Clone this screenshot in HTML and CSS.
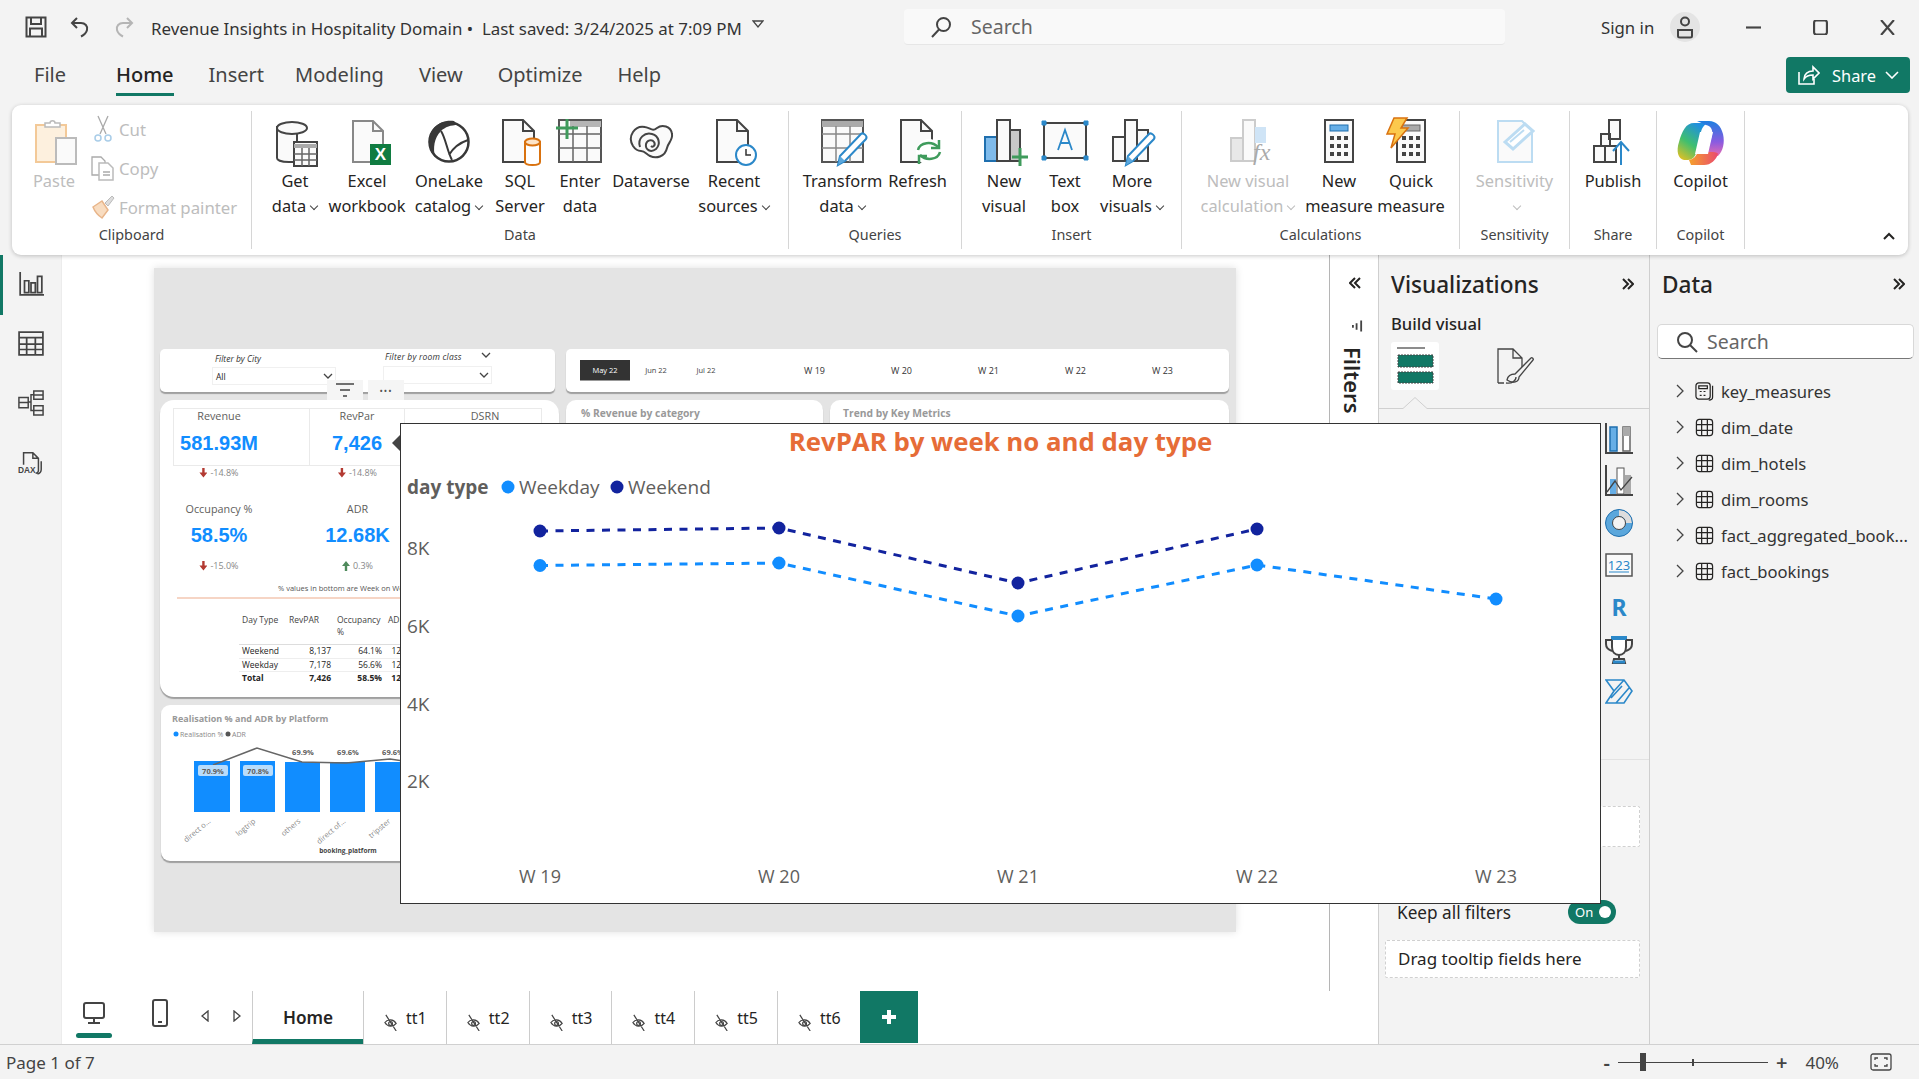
FILE: index.html
```html
<!DOCTYPE html>
<html lang="en">
<head>
    <meta charset="UTF-8">
    <meta name="viewport" content="width=device-width, initial-scale=1.0">
    <title>Revenue Insights in Hospitality Domain</title>
    <link rel="stylesheet" href="styles.css">
</head>
<body>
<div class="app">

    <!-- title bar -->
    <div class="titlebar">
        <div class="quick">
            <svg class="ic22" viewBox="0 0 22 22"><path d="M1.5 1.5h19v19h-19zM6 1.5v6.500h10v-6.500M5 20.500v-8h12v8" class="line"/></svg>
            <svg class="ic22" viewBox="0 0 22 22"><path d="M8 2L3 7l5 5M3 7h9c4 0 7 3 6 7-.6 2.500-3 5-6 6.500" class="line"/></svg>
            <svg class="ic22 off" viewBox="0 0 22 22"><path d="M14 2l5 5-5 5M19 7h-9c-4 0-7 3-6 7 .6 2.500 3 5 6 6.500" class="line"/></svg>
        </div>
        <div class="docName">Revenue Insights in Hospitality Domain •&nbsp; Last saved: 3/24/2025 at 7:09 PM</div>
        <svg class="docArrow" viewBox="0 0 12 8"><path d="M1 1h10L6 7z" class="line thin"/></svg>
        <div class="searchTop">
            <svg class="ic22" viewBox="0 0 22 22"><circle cx="13.500" cy="8.500" r="6.500" class="line"/><path d="M9 13.500L2 21" class="line"/></svg>
            <span>Search</span>
        </div>
        <div class="signIn">Sign in</div>
        <div class="avatar"><svg viewBox="0 0 20 24" width="20" height="24"><circle cx="10" cy="6.500" r="4" class="line"/><path d="M3 21v-6h14v6c0 1-1 1.500-2 1.500H5c-1 0-2-.5-2-1.500z" class="line"/></svg></div>
        <div class="winBtns">
            <svg viewBox="0 0 14 14"><path d="M0 7h14" class="line"/></svg>
            <svg viewBox="0 0 14 14"><rect x="1" y="0.500" width="12" height="13" rx="2" class="line"/></svg>
            <svg viewBox="0 0 14 14"><path d="M1 0l12 14M13 0L1 14" class="line"/></svg>
        </div>
    </div>

    <!-- menu -->
    <div class="menubar">
        <span class="menuItem first">File</span>
        <span class="menuItem active">Home</span>
        <span class="menuItem insert">Insert</span>
        <span class="menuItem">Modeling</span>
        <span class="menuItem">View</span>
        <span class="menuItem">Optimize</span>
        <span class="menuItem">Help</span>
        <div class="shareBtn">
            <svg viewBox="0 0 24 22" width="24" height="22"><path d="M3 8v12h15v-5M8 15c0-5 4-8 9-8V3l6 6-6 6v-4c-4 0-7 1-9 4z" class="line white"/></svg>
            <span>Share</span>
            <svg class="shareArrow" viewBox="0 0 14 8" width="14" height="8"><path d="M1 1l6 6 6-6" class="line white"/></svg>
        </div>
    </div>

    <!-- ribbon -->
    <div class="ribbon">
        <div class="group gClip">
            <div class="groupBody clipBody">
                <div class="rb off pasteBtn">
                    <svg viewBox="0 0 48 48"><path d="M6 7h30v37H6z" fill="#fdf0de" stroke="#f3c998" stroke-width="2"/><path d="M15 9V5h5c0-3 5-3 5 0h5v4z" fill="#fff" stroke="#bbb" stroke-width="1.500"/><rect x="26" y="20" width="20" height="26" fill="#fafafa" stroke="#bbb" stroke-width="2"/></svg>
                    <span>Paste</span>
                </div>
                <div class="clipList">
                    <div class="clipRow off"><svg class="cutIcon" viewBox="0 0 20 28" width="20" height="28"><path d="M5 1l8 18M15 1L7 19" class="line thin grey"/><circle cx="5" cy="23" r="3" fill="none" stroke="#a9cde8" stroke-width="1.500"/><circle cx="15" cy="23" r="3" fill="none" stroke="#a9cde8" stroke-width="1.500"/></svg><span>Cut</span></div>
                    <div class="clipRow off"><svg viewBox="0 0 26 26" width="26" height="26"><path d="M10 20H2V2h9l4 4v2" class="line thin grey"/><path d="M9 8h9l5 5v12H9z" fill="#fff" stroke="#bbb" stroke-width="1.500"/><path d="M13 17h7M13 20h7" class="line thin grey"/></svg><span>Copy</span></div>
                    <div class="clipRow off"><svg viewBox="0 0 26 26" width="26" height="26"><path d="M3 13l9-6 6 9-6 8c-3-2-7-6-9-11z" fill="#f8dcc0" stroke="#e8b58a" stroke-width="1.500"/><path d="M15 9l7-7 2 2-6 8z" fill="#ddd" stroke="#bbb"/></svg><span>Format painter</span></div>
                </div>
            </div>
            <div class="groupName">Clipboard</div>
        </div>

        <div class="group gData">
            <div class="groupBody dataBtns">
                <div class="rb">
                    <svg viewBox="0 0 48 48"><path d="M6 9v31c0 2 4 4 12 4h8V9z" fill="#fafafa" stroke="#444" stroke-width="2"/><ellipse cx="21" cy="10" rx="15" ry="6" fill="#fafafa" stroke="#444" stroke-width="2"/><rect x="23" y="24" width="23" height="24" fill="#fafafa" stroke="#444" stroke-width="2"/><path d="M23 28h23" stroke="#aaa" stroke-width="4"/><path d="M23 36h23M23 42h23M31 30v18M38 30v18" stroke="#666" stroke-width="1.500"/></svg>
                    <span>Get<br>data<i class="chev"></i></span>
                </div>
                <div class="rb">
                    <svg viewBox="0 0 48 48"><path d="M10 3h20l10 10v31H10z" fill="#fafafa" stroke="#888" stroke-width="2"/><path d="M30 3v10h10" fill="none" stroke="#888" stroke-width="2"/><rect x="27" y="26" width="21" height="21" fill="#107c41"/><text x="37.500" y="42" class="xl">X</text></svg>
                    <span>Excel<br>workbook</span>
                </div>
                <div class="rb">
                    <svg viewBox="0 0 48 48"><circle cx="24" cy="24" r="19.500" fill="#fff" stroke="#383838" stroke-width="2.500"/><path d="M29 3C14 1 3 12 4 26c1 6 3 10 6 13-2-9-1-19 6-26 4-4 10-6 17-6z" fill="#383838"/><path d="M16 13c5 8 6 20 11 29M24 37c4-7 10-12 19-15" fill="none" stroke="#383838" stroke-width="2"/></svg>
                    <span>OneLake<br>catalog<i class="chev"></i></span>
                </div>
                <div class="rb">
                    <svg viewBox="0 0 48 48"><path d="M7 2h20l11 11v31H7z" fill="#fafafa" stroke="#444" stroke-width="2"/><path d="M27 2v11h11" fill="none" stroke="#444" stroke-width="2"/><path d="M29 24v20c0 2 4 3 7.500 3s7.500-1 7.500-3V24z" fill="#fff" stroke="#d9720f" stroke-width="2"/><ellipse cx="36.500" cy="24" rx="7.500" ry="3.500" fill="#fde4c8" stroke="#d9720f" stroke-width="2"/></svg>
                    <span>SQL<br>Server</span>
                </div>
                <div class="rb">
                    <svg viewBox="0 0 48 48"><rect x="3" y="2" width="42" height="42" fill="#fafafa" stroke="#555" stroke-width="2"/><path d="M14 6h31" stroke="#b5b5b5" stroke-width="6"/><path d="M3 16h42M3 30h42M17 8v36M31 8v36" stroke="#666" stroke-width="1.500"/><path d="M11 1v20M0 10h22" stroke="#3f9b5c" stroke-width="3"/></svg>
                    <span>Enter<br>data</span>
                </div>
                <div class="rb">
                    <svg viewBox="0 0 48 48"><path d="M6 28c-6-10 2-21 12-19 6 1 7 5 12 1 5-4 14-2 15 6 1 6-4 9-5 14-2 9-11 11-17 8-4-2-5-5-9-5s-6-2-8-5z" fill="#fafafa" stroke="#444" stroke-width="2"/><path d="M13 29c-3-9 5-15 12-13 7 2 9 10 4 15-5 4-11 1-10-5 1-4 6-5 8-2 2 3-1 6-3 4" fill="none" stroke="#444" stroke-width="2"/></svg>
                    <span>Dataverse</span>
                </div>
                <div class="rb">
                    <svg viewBox="0 0 48 48"><path d="M7 2h20l11 11v31H7z" fill="#fafafa" stroke="#444" stroke-width="2"/><path d="M27 2v11h11" fill="none" stroke="#444" stroke-width="2"/><circle cx="36" cy="37" r="10" fill="#fff" stroke="#2b88c9" stroke-width="2"/><path d="M36 31v6h5" fill="none" stroke="#333" stroke-width="1.500"/></svg>
                    <span>Recent<br>sources<i class="chev"></i></span>
                </div>
            </div>
            <div class="groupName">Data</div>
        </div>

        <div class="group gQueries">
            <div class="groupBody queryBtns">
                <div class="rb">
                    <svg viewBox="0 0 48 48"><rect x="3" y="2" width="41" height="42" fill="#fafafa" stroke="#555" stroke-width="2"/><path d="M3 6h41" stroke="#aaa" stroke-width="6"/><path d="M3 16h41M3 30h41M17 8v36M31 8v36" stroke="#888" stroke-width="1.500"/><path d="M19 47l2-9 21-22c2-2 7 2 5 5L26 43z" fill="#fff" stroke="#2b88c9" stroke-width="2"/><path d="M19 47l2-9 5 5z" fill="#5ba7dc"/></svg>
                    <span>Transform<br>data<i class="chev"></i></span>
                </div>
                <div class="rb">
                    <svg viewBox="0 0 48 48"><path d="M7 2h20l11 11v31H7z" fill="#fafafa" stroke="#444" stroke-width="2"/><path d="M27 2v11h11" fill="none" stroke="#444" stroke-width="2"/><circle cx="35" cy="34" r="13" fill="#fff"/><path d="M24 32c2-8 14-9 20-3M46 34c-2 8-14 9-20 3" fill="none" stroke="#3f9b5c" stroke-width="2.500"/><path d="M45 22v8h-8M25 46v-8h8" fill="none" stroke="#3f9b5c" stroke-width="2.500"/></svg>
                    <span>Refresh</span>
                </div>
            </div>
            <div class="groupName">Queries</div>
        </div>

        <div class="group gInsert">
            <div class="groupBody insertBtns">
                <div class="rb">
                    <svg viewBox="0 0 48 48"><rect x="5" y="19" width="13" height="24" fill="#7fbbeb" stroke="#1f6fae" stroke-width="2"/><rect x="17" y="2" width="13" height="41" fill="#fafafa" stroke="#444" stroke-width="2"/><path d="M30 12h10v31H30z" fill="#c8c8c8" stroke="#444" stroke-width="2"/><path d="M40 30v18M32 39h16" stroke="#3f9b5c" stroke-width="3"/></svg>
                    <span>New<br>visual</span>
                </div>
                <div class="rb">
                    <svg viewBox="0 0 48 48"><rect x="3" y="5" width="42" height="35" fill="#fafafa" stroke="#444" stroke-width="2"/><path d="M1 3h4v4H1zM43 3h4v4h-4zM1 38h4v4H1zM43 38h4v4h-4z" fill="#2b88c9" stroke="#2b88c9"/><path d="M17 32l7-20 7 20M19.500 25h9" fill="none" stroke="#2b88c9" stroke-width="1.800"/></svg>
                    <span>Text<br>box</span>
                </div>
                <div class="rb">
                    <svg viewBox="0 0 48 48"><rect x="5" y="19" width="12" height="24" fill="#fafafa" stroke="#444" stroke-width="2"/><rect x="17" y="2" width="12" height="41" fill="#fafafa" stroke="#444" stroke-width="2"/><path d="M29 12h11v31H29z" fill="#fafafa" stroke="#444" stroke-width="2"/><path d="M18 47l2-9 21-22c2-2 7 2 5 5L25 43z" fill="#fff" stroke="#2b88c9" stroke-width="2"/><path d="M18 47l2-9 5 5z" fill="#5ba7dc"/></svg>
                    <span>More<br>visuals<i class="chev"></i></span>
                </div>
            </div>
            <div class="groupName">Insert</div>
        </div>

        <div class="group gCalc">
            <div class="groupBody calcBtns">
                <div class="rb off">
                    <svg viewBox="0 0 48 48"><rect x="7" y="20" width="13" height="23" fill="#e8e8e8" stroke="#ccc" stroke-width="2"/><rect x="19" y="2" width="12" height="41" fill="#fafafa" stroke="#ccc" stroke-width="2"/><path d="M31 9h11v16H31z" fill="#cfe4f6"/><text x="29" y="42" class="fx">fx</text></svg>
                    <span>New visual<br>calculation<i class="chev"></i></span>
                </div>
                <div class="rb">
                    <svg viewBox="0 0 48 48"><rect x="10" y="2" width="28" height="42" fill="#fafafa" stroke="#444" stroke-width="2"/><rect x="15" y="7" width="18" height="6" fill="#66aee6" stroke="#1f6fae"/><path d="M15 18h4v4h-4zM22 18h4v4h-4zM29 18h4v4h-4zM15 26h4v4h-4zM22 26h4v4h-4zM29 26h4v4h-4zM15 34h4v4h-4zM22 34h4v4h-4zM29 34h4v4h-4z" fill="#444"/></svg>
                    <span>New<br>measure</span>
                </div>
                <div class="rb">
                    <svg viewBox="0 0 48 48"><rect x="10" y="2" width="28" height="42" fill="#fafafa" stroke="#444" stroke-width="2"/><rect x="15" y="7" width="18" height="6" fill="#aaa" stroke="#666"/><path d="M15 18h4v4h-4zM22 18h4v4h-4zM29 18h4v4h-4zM15 26h4v4h-4zM22 26h4v4h-4zM29 26h4v4h-4zM15 34h4v4h-4zM22 34h4v4h-4zM29 34h4v4h-4z" fill="#444"/><path d="M7 0h13l-6 10h7L4 30l4-14H0z" fill="#fcc94d" stroke="#d9720f" stroke-width="1.500"/></svg>
                    <span>Quick<br>measure</span>
                </div>
            </div>
            <div class="groupName">Calculations</div>
        </div>

        <div class="group gSens">
            <div class="groupBody soloBtn">
                <div class="rb off">
                    <svg viewBox="0 0 48 48"><path d="M7 3h24l10 10v31H7z" fill="#fafafa" stroke="#bcdcf2" stroke-width="2"/><path d="M14 24L34 6l8 7-20 18z" fill="#fff" stroke="#bcdcf2" stroke-width="3"/><path d="M19 24l14-12" stroke="#bcdcf2" stroke-width="2"/></svg>
                    <span>Sensitivity<br><i class="chev"></i></span>
                </div>
            </div>
            <div class="groupName">Sensitivity</div>
        </div>

        <div class="group gShare">
            <div class="groupBody soloBtn">
                <div class="rb">
                    <svg viewBox="0 0 48 48"><path d="M20 2h11v19H20zM12 16h9v12h-9zM5 28h11v16H5zM16 28h11v16H16z" fill="#fafafa" stroke="#444" stroke-width="2"/><path d="M32 47V24M24 33l8-9 8 9" fill="none" stroke="#2b88c9" stroke-width="2"/></svg>
                    <span>Publish</span>
                </div>
            </div>
            <div class="groupName">Share</div>
        </div>

        <div class="group gCopilot">
            <div class="groupBody soloBtn">
                <div class="rb">
                    <svg viewBox="0 0 48 48">
                        <defs>
                            <linearGradient id="cpA" x1="0" y1="1" x2="0.600" y2="0"><stop offset="0" stop-color="#f5c01b"/><stop offset="0.500" stop-color="#3fbf6f"/><stop offset="1" stop-color="#1f8fe0"/></linearGradient>
                            <linearGradient id="cpB" x1="0.500" y1="0" x2="0.500" y2="1"><stop offset="0" stop-color="#1d7fe0"/><stop offset="0.600" stop-color="#8a5be0"/><stop offset="1" stop-color="#e86bb0"/></linearGradient>
                            <linearGradient id="cpC" x1="0" y1="0" x2="1" y2="0"><stop offset="0" stop-color="#f5a12b"/><stop offset="1" stop-color="#ea4a6e"/></linearGradient>
                        </defs>
                        <path d="M17 5h15c-5 1-7 5-8 9l-5 21c-1 4-4 7-8 7H7C1 41-1 33 2 24 5 13 9 5 17 5z" fill="url(#cpA)"/>
                        <path d="M20 3h12c7 0 12 5 14 13 2 9 0 17-5 22h-7l-4-2 5-19c1-5-1-9-6-10z" fill="url(#cpB)"/>
                        <path d="M12 42c5-1 7-4 9-8h15c3 0 5 1 5 2-2 6-7 11-14 11H14z" fill="url(#cpC)"/>
                        <path d="M23 14h13l-5 22H18z" fill="#fff"/>
                    </svg>
                    <span>Copilot</span>
                </div>
            </div>
            <div class="groupName">Copilot</div>
        </div>

        <svg class="collapse" viewBox="0 0 12 8" width="12" height="8"><path d="M1 7l5-5 5 5" class="line dark"/></svg>
    </div>

    <!-- work area -->
    <div class="main">
        <div class="rail">
            <div class="railBtn current"><svg viewBox="0 0 24 24"><path d="M2 1v21h22" class="line"/><path d="M6 9h4v11H6zM12 11h4v9h-4zM18 5h4v15h-4z" class="line"/></svg></div>
            <div class="railBtn"><svg viewBox="0 0 24 24"><path d="M1 2h22v21H1zM1 7h22M1 13h22M1 18h22M8 7v16M16 7v16" class="line"/></svg></div>
            <div class="railBtn"><svg viewBox="0 0 28 28"><path d="M1 8h10v11H1zM1 13.500h10M17 1h10v9H17zM17 5.500h10M17 17h10v10H17zM17 22h10M11 13h3V5h3M14 13v9h3" class="line"/></svg></div>
            <div class="railBtn"><svg viewBox="0 0 28 26"><path d="M6 15V2h10l6 6v13c0 1-1 3-3 3M16 2v6h6M25 11v9c0 2-1 4-4 5" class="line thin"/><text x="0" y="24" class="dax">DAX</text></svg></div>
        </div>

        <div class="center">
            <div class="canvasRow">
                <div class="canvas">
                    <div class="page">
                        <!-- visuals sit freely on the report page -->
                        <div class="visual vFilter">
                            <span class="slLabel city">Filter by City</span>
                            <span class="slLabel room">Filter by room class</span>
                            <div class="slBox cityBox">All</div>
                            <div class="slBox roomBox"></div>
                            <svg class="slChev c1" viewBox="0 0 10 6"><path d="M1 1l4 4 4-4" class="line thin"/></svg>
                            <svg class="slChev c2" viewBox="0 0 10 6"><path d="M1 1l4 4 4-4" class="line thin"/></svg>
                            <svg class="slChev c3" viewBox="0 0 10 6"><path d="M1 1l4 4 4-4" class="line thin"/></svg>
                        </div>
                        <div class="hoverTab hFilter"><svg viewBox="0 0 18 16" width="18" height="16"><path d="M0 2h18M4 8h10M7 14h4" class="line thin"/></svg></div>
                        <div class="hoverTab hMore"><span class="dots">•••</span></div>

                        <div class="visual vMonth">
                            <span class="mon on">May 22</span>
                            <span class="mon">Jun 22</span>
                            <span class="mon">Jul 22</span>
                            <div class="weeks"><span>W 19</span><span>W 20</span><span>W 21</span><span>W 22</span><span>W 23</span></div>
                        </div>

                        <div class="visual vKpi">
                            <div class="kpiRow tiles">
                                <div class="tile tA"><span class="kLabel">Revenue</span><b class="kVal">581.93M</b></div>
                                <div class="tile tB"><span class="kLabel">RevPar</span><b class="kVal">7,426</b></div>
                                <div class="tile tC"><span class="kLabel">DSRN</span></div>
                            </div>
                            <div class="kpiRow deltas">
                                <div class="colA delta"><i class="arrow down"></i>-14.8%</div>
                                <div class="colB delta"><i class="arrow down"></i>-14.8%</div>
                            </div>
                            <div class="kpiRow second">
                                <div class="colA"><span class="kLabel">Occupancy %</span><b class="kVal">58.5%</b></div>
                                <div class="colB"><span class="kLabel">ADR</span><b class="kVal">12.68K</b></div>
                            </div>
                            <div class="kpiRow deltas lower">
                                <div class="colA delta"><i class="arrow down"></i>-15.0%</div>
                                <div class="colB delta"><i class="arrow up"></i>0.3%</div>
                            </div>
                            <div class="kNote">% values in bottom are Week on Week</div>
                            <div class="kRule"></div>
                            <table class="kTable">
                                <tr class="head"><th class="first colDay">Day Type</th><th class="colRev">RevPAR</th><th class="colOcc">Occupancy<br>%</th><th class="colAdr">ADR</th></tr>
                                <tr><td class="first">Weekend</td><td>8,137</td><td>64.1%</td><td>12,689</td></tr>
                                <tr><td class="first">Weekday</td><td>7,178</td><td>56.6%</td><td>12,679</td></tr>
                                <tr class="total"><td class="first">Total</td><td>7,426</td><td>58.5%</td><td>12,684</td></tr>
                            </table>
                        </div>
                        <div class="dataPoint"></div>

                        <div class="visual vCat"><span class="vTitle">% Revenue by category</span></div>
                        <div class="visual vTrend"><span class="vTitle">Trend by Key Metrics</span></div>

                        <div class="visual vPlat">
                            <svg viewBox="0 0 420 156" width="420" height="156">
                                <text x="11" y="17" class="pTitle">Realisation % and ADR by Platform</text>
                                <circle cx="15" cy="29" r="2.500" fill="#118dff"/><text x="19" y="32" class="pLeg">Realisation %</text>
                                <circle cx="67" cy="29" r="2.500" fill="#555"/><text x="71" y="32" class="pLeg">ADR</text>
                                <path d="M33 56h36v51H33zM79 56h35v51H79zM124 57h35v50h-35zM169 57h35v50h-35zM214 57h35v50h-35z" fill="#118dff"/>
                                <path d="M52 60L96 43l45 14 44 1 44-4 20 3" fill="none" stroke="#666" stroke-width="1.500"/>
                                <rect x="37" y="60" width="30" height="11" rx="2" fill="#b8dcfb"/><rect x="82" y="60" width="30" height="11" rx="2" fill="#b8dcfb"/>
                                <text x="52" y="69" class="pVal">70.9%</text><text x="97" y="69" class="pVal">70.8%</text>
                                <text x="142" y="50" class="pVal">69.9%</text><text x="187" y="50" class="pVal">69.6%</text><text x="232" y="50" class="pVal">69.6%</text>
                                <text class="pAxis" transform="translate(50 117) rotate(-40)" text-anchor="end">direct o...</text>
                                <text class="pAxis" transform="translate(95 117) rotate(-40)" text-anchor="end">logtrip</text>
                                <text class="pAxis" transform="translate(140 117) rotate(-40)" text-anchor="end">others</text>
                                <text class="pAxis" transform="translate(185 117) rotate(-40)" text-anchor="end">direct of...</text>
                                <text class="pAxis" transform="translate(230 117) rotate(-40)" text-anchor="end">tripster</text>
                                <text x="187" y="148" class="pFoot">booking_platform</text>
                            </svg>
                        </div>
                    </div>
                </div>
                <div class="filters">
                    <svg class="dbl" viewBox="0 0 12 12"><path d="M6 1L1 6l5 5M11 1L6 6l5 5" class="line dark"/></svg>
                    <svg class="filterGlyph" viewBox="0 0 12 14"><path d="M1 6v3M5 4v7M10 1v12" class="line"/></svg>
                    <div class="filterWord">Filters</div>
                </div>
            </div>
            <div class="tabs">
                <div class="devices">
                    <div class="device on"><svg viewBox="0 0 24 24" width="24" height="24"><rect x="2" y="2" width="20" height="15" rx="2" class="line"/><path d="M12 17v4M6 22h12" class="line"/></svg></div>
                    <div class="device phone"><svg viewBox="0 0 16 28" width="16" height="28"><rect x="1" y="1" width="14" height="26" rx="2" class="line"/><path d="M6 23h4" class="line"/></svg></div>
                    <div class="pager">
                        <svg viewBox="0 0 8 12" width="8" height="12"><path d="M7 1L1 6l6 5z" class="line thin"/></svg>
                        <svg viewBox="0 0 8 12" width="8" height="12"><path d="M1 1l6 5-6 5z" class="line thin"/></svg>
                    </div>
                </div>
                <div class="tab home">Home</div>
                <div class="tab"><svg viewBox="0 0 18 18"><path d="M2 9c3-4 9-4 12 1-3 4-9 4-12-1zM3 1l11 17" class="line thin"/><circle cx="8" cy="10" r="2" class="line thin"/></svg><span>tt1</span></div>
                <div class="tab"><svg viewBox="0 0 18 18"><path d="M2 9c3-4 9-4 12 1-3 4-9 4-12-1zM3 1l11 17" class="line thin"/><circle cx="8" cy="10" r="2" class="line thin"/></svg><span>tt2</span></div>
                <div class="tab"><svg viewBox="0 0 18 18"><path d="M2 9c3-4 9-4 12 1-3 4-9 4-12-1zM3 1l11 17" class="line thin"/><circle cx="8" cy="10" r="2" class="line thin"/></svg><span>tt3</span></div>
                <div class="tab"><svg viewBox="0 0 18 18"><path d="M2 9c3-4 9-4 12 1-3 4-9 4-12-1zM3 1l11 17" class="line thin"/><circle cx="8" cy="10" r="2" class="line thin"/></svg><span>tt4</span></div>
                <div class="tab"><svg viewBox="0 0 18 18"><path d="M2 9c3-4 9-4 12 1-3 4-9 4-12-1zM3 1l11 17" class="line thin"/><circle cx="8" cy="10" r="2" class="line thin"/></svg><span>tt5</span></div>
                <div class="tab"><svg viewBox="0 0 18 18"><path d="M2 9c3-4 9-4 12 1-3 4-9 4-12-1zM3 1l11 17" class="line thin"/><circle cx="8" cy="10" r="2" class="line thin"/></svg><span>tt6</span></div>
                <div class="addTab"><svg viewBox="0 0 16 16" width="16" height="16"><path d="M8 1v14M1 8h14" stroke="#fff" stroke-width="4"/></svg></div>
            </div>
        </div>

        <div class="vizPane">
            <div class="paneHead"><span>Visualizations</span><svg class="dbl" viewBox="0 0 12 12"><path d="M1 1l5 5-5 5M6 1l5 5-5 5" class="line dark"/></svg></div>
            <div class="buildLabel">Build visual</div>
            <div class="buildTabs">
                <div class="buildTab on"><svg viewBox="0 0 48 48" width="48" height="48"><path d="M6 6h28" stroke="#666" stroke-width="1.500"/><rect x="7" y="13" width="35" height="12" fill="#117865" stroke="#444" stroke-dasharray="2 1"/><rect x="7" y="30" width="35" height="11" fill="#117865" stroke="#444" stroke-dasharray="2 1"/></svg></div>
                <div class="buildTab"><svg viewBox="0 0 38 38" width="38" height="38"><path d="M2 36V2h15l9 9v9M17 2v9h9M2 36h6M10 36c6 1 10-2 10-6" class="line thin"/><path d="M11 33c1-5 4-6 8-6L35 11c1-1 3 1 2 2L23 30c0 5-6 7-12 3z" class="line thin"/></svg></div>
            </div>
            <svg class="notchLine" viewBox="0 0 270 12" width="270" height="12"><path d="M0 11.500h24l12-11 12 11h222" fill="none" stroke="#d0d0d0"/></svg>
            <div class="vizIcons">
                <svg viewBox="0 0 28 32"><path d="M1 0v30h27" class="line"/><rect x="5" y="4" width="7" height="24" fill="#66aee6" stroke="#1f6fae" stroke-width="1.500"/><rect x="18" y="4" width="7" height="24" fill="#fff" stroke="#666" stroke-width="1.500"/><rect x="18" y="4" width="7" height="9" fill="#aaa"/></svg>
                <svg viewBox="0 0 28 32"><path d="M1 0v30h27" class="line"/><rect x="5" y="14" width="6" height="15" fill="#66aee6"/><rect x="12" y="3" width="7" height="26" fill="#fff" stroke="#555"/><rect x="20" y="10" width="6" height="19" fill="#aaa"/><path d="M2 27l8-11 6 9 11-13" class="line thin"/></svg>
                <svg viewBox="0 0 28 32"><circle cx="14" cy="16" r="10" fill="none" stroke="#5ba7dc" stroke-width="7"/><path d="M14 6a10 10 0 0 1 10 10" fill="none" stroke="#ddd" stroke-width="6"/><circle cx="14" cy="16" r="13.500" fill="none" stroke="#1f6fae"/><circle cx="14" cy="16" r="6.500" fill="none" stroke="#444"/></svg>
                <svg viewBox="0 0 28 32"><rect x="1" y="5" width="26" height="22" fill="#fafafa" stroke="#555" stroke-width="1.500"/><text x="14" y="21" class="num123">123</text><path d="M4 23h20" stroke="#2b88c9"/></svg>
                <svg viewBox="0 0 28 32"><text x="14" y="25" class="rGlyph">R</text></svg>
                <svg viewBox="0 0 28 32"><path d="M7 4h14v10c0 5-3 8-7 8s-7-3-7-8z" fill="#fff" stroke="#444" stroke-width="2"/><path d="M6 3h16v4H6z" fill="#2b88c9"/><path d="M7 7H1v4c0 4 3 6 6 7M21 7h6v4c0 4-3 6-6 7M14 22v4M9 26h10l1 4H8z" fill="none" stroke="#444" stroke-width="2"/><path d="M8 29h12" stroke="#2b88c9" stroke-width="3"/></svg>
                <svg viewBox="0 0 28 32"><path d="M1 5h18l8 11-8 12H1l8-12zM9 16L19 5M6 23L17 11M11 28L24 13" fill="none" stroke="#2b88c9" stroke-width="1.600"/></svg>
            </div>
            <div class="vizRule"></div>
            <div class="dropBox upper"></div>
            <div class="keepRow">
                <span>Keep all filters</span>
                <div class="toggle"><span>On</span><i></i></div>
            </div>
            <div class="dropBox">Drag tooltip fields here</div>
        </div>

        <div class="dataPane">
            <div class="paneHead"><span>Data</span><svg class="dbl" viewBox="0 0 12 12"><path d="M1 1l5 5-5 5M6 1l5 5-5 5" class="line dark"/></svg></div>
            <div class="dataSearch">
                <svg viewBox="0 0 22 22" width="22" height="22"><circle cx="9" cy="9" r="7" class="line"/><path d="M14 14l7 7" class="line"/></svg>
                <span>Search</span>
            </div>
            <ul class="tree">
                <li><svg class="tw" viewBox="0 0 8 14"><path d="M1 1l6 6-6 6" class="line thin"/></svg><svg class="tIcon" viewBox="0 0 20 20"><rect x="1" y="1" width="15" height="17" rx="3" class="line thin dark"/><path d="M4 4h9v3H4zM5 10h2M9 10h2M5 14h2M9 14h2" class="line thin dark"/><path d="M18.500 4v12c0 2-2 3-4 3" class="line thin dark"/></svg><span>key_measures</span></li>
                <li><svg class="tw" viewBox="0 0 8 14"><path d="M1 1l6 6-6 6" class="line thin"/></svg><svg class="tIcon" viewBox="0 0 20 20"><rect x="1.500" y="1.500" width="17" height="17" rx="3" class="line thin dark"/><path d="M1.500 7h17M1.500 13h17M7 1.500v17M13 1.500v17" class="line thin dark"/></svg><span>dim_date</span></li>
                <li><svg class="tw" viewBox="0 0 8 14"><path d="M1 1l6 6-6 6" class="line thin"/></svg><svg class="tIcon" viewBox="0 0 20 20"><rect x="1.500" y="1.500" width="17" height="17" rx="3" class="line thin dark"/><path d="M1.500 7h17M1.500 13h17M7 1.500v17M13 1.500v17" class="line thin dark"/></svg><span>dim_hotels</span></li>
                <li><svg class="tw" viewBox="0 0 8 14"><path d="M1 1l6 6-6 6" class="line thin"/></svg><svg class="tIcon" viewBox="0 0 20 20"><rect x="1.500" y="1.500" width="17" height="17" rx="3" class="line thin dark"/><path d="M1.500 7h17M1.500 13h17M7 1.500v17M13 1.500v17" class="line thin dark"/></svg><span>dim_rooms</span></li>
                <li><svg class="tw" viewBox="0 0 8 14"><path d="M1 1l6 6-6 6" class="line thin"/></svg><svg class="tIcon" viewBox="0 0 20 20"><rect x="1.500" y="1.500" width="17" height="17" rx="3" class="line thin dark"/><path d="M1.500 7h17M1.500 13h17M7 1.500v17M13 1.500v17" class="line thin dark"/></svg><span>fact_aggregated_book...</span></li>
                <li><svg class="tw" viewBox="0 0 8 14"><path d="M1 1l6 6-6 6" class="line thin"/></svg><svg class="tIcon" viewBox="0 0 20 20"><rect x="1.500" y="1.500" width="17" height="17" rx="3" class="line thin dark"/><path d="M1.500 7h17M1.500 13h17M7 1.500v17M13 1.500v17" class="line thin dark"/></svg><span>fact_bookings</span></li>
            </ul>
        </div>

        <!-- focus mode chart, drawn over everything -->
        <div class="focusChart">
            <div class="cTitle">RevPAR by week no and day type</div>
            <svg viewBox="0 36 1199 443" width="1199" height="443">
                <text x="6" y="70" class="cLegTitle">day type</text>
                <circle cx="107" cy="63" r="6.500" fill="#118dff"/><text x="118" y="70" class="cLabel">Weekday</text>
                <circle cx="216" cy="63" r="6.500" fill="#12239e"/><text x="227" y="70" class="cLabel">Weekend</text>
                <text x="6" y="131" class="cLabel">8K</text>
                <text x="6" y="209" class="cLabel">6K</text>
                <text x="6" y="287" class="cLabel">4K</text>
                <text x="6" y="364" class="cLabel">2K</text>
                <path d="M139 107L378 104 617 159 856 105" class="series sWeekend"/>
                <path d="M139 141.500L378 139 617 192 856 141 1095 175" class="series sWeekday"/>
                <g fill="#12239e"><circle cx="139" cy="107" r="6.500"/><circle cx="378" cy="104" r="6.500"/><circle cx="617" cy="159" r="6.500"/><circle cx="856" cy="105" r="6.500"/></g>
                <g fill="#118dff"><circle cx="139" cy="141.500" r="6.500"/><circle cx="378" cy="139" r="6.500"/><circle cx="617" cy="192" r="6.500"/><circle cx="856" cy="141" r="6.500"/><circle cx="1095" cy="175" r="6.500"/></g>
                <text x="139" y="459" class="cLabel mid">W 19</text>
                <text x="378" y="459" class="cLabel mid">W 20</text>
                <text x="617" y="459" class="cLabel mid">W 21</text>
                <text x="856" y="459" class="cLabel mid">W 22</text>
                <text x="1095" y="459" class="cLabel mid">W 23</text>
            </svg>
        </div>
    </div>

    <!-- status bar -->
    <div class="status">
        <span class="pageNo">Page 1 of 7</span>
        <div class="zoomBox">
            <span class="zoomSign">-</span>
            <div class="slider"><i class="thumb"></i><i class="tick"></i></div>
            <span class="zoomSign">+</span>
            <span class="zoomPct">40%</span>
            <svg viewBox="0 0 22 18" width="22" height="18"><rect x="1" y="1" width="20" height="16" rx="2" class="line thin"/><path d="M5 7V5h3M14 5h3v2M17 11v2h-3M8 13H5v-2" class="line thin"/></svg>
        </div>
    </div>
</div>
</body>
</html>
```

FILE: styles.css
```css
*{
    margin: 0px;
    padding: 0px;
    box-sizing: border-box;
    list-style: none;
}
body{
    width: 1919px;
    height: 1079px;
    overflow: hidden;
    background: #f3f3f3;
    font-family: "Noto Sans", "Open Sans", sans-serif;
    color: #252423;
}
svg{
    display: block;
}
.line{
    fill: none;
    stroke: #444;
    stroke-width: 2;
}
.thin{
    stroke-width: 1.3;
}
.white{
    stroke: #fff;
    stroke-width: 1.6;
}
.dark{
    stroke: #252423;
}
.grey{
    stroke: #aaa;
}
.app{
    display: grid;
    grid-template-rows: 54px 51px 150px 789px 35px;
    height: 1079px;
}

/* title bar */
.titlebar{
    display: flex;
    align-items: center;
    position: relative;
    padding-left: 25px;
}
.quick{
    display: flex;
    gap: 22px;
}
.ic22{
    width: 22px;
    height: 22px;
}
.ic22.off{
    opacity: 0.35;
}
.docName{
    margin: 3px 0 0 16px;
    width: 592px;
    font-size: 16.9px;
    color: #333;
    white-space: nowrap;
}
.docArrow{
    width: 12px;
    height: 8px;
    margin: -6px 0 0 9px;
}
.searchTop{
    display: flex;
    align-items: center;
    gap: 19px;
    margin-left: 140px;
    width: 601px;
    height: 36px;
    padding-left: 26px;
    background: #f9f9f9;
    border-bottom: 1px solid #e6e6e6;
    border-radius: 4px;
    font-size: 19.5px;
    color: #666;
}
.signIn{
    margin-left: 96px;
    font-size: 16.8px;
    color: #333;
}
.avatar{
    display: flex;
    align-items: center;
    justify-content: center;
    margin-left: 16px;
    width: 30px;
    height: 30px;
    border-radius: 50%;
    background: #e4e4e4;
}
.winBtns{
    display: flex;
    gap: 52px;
    margin-left: 46px;
}
.winBtns svg{
    width: 15px;
    height: 15px;
}

/* menu */
.menubar{
    display: flex;
    align-items: flex-start;
    padding-left: 34px;
    font-size: 20px;
    color: #444;
}
.menuItem{
    height: 42px;
    padding-top: 6px;
    margin-right: 35px;
    line-height: 30px;
    white-space: nowrap;
}
.menuItem.first{
    margin-right: 50px;
}
.menuItem.insert{
    margin-right: 31px;
}
.menuItem.active{
    color: #252423;
    font-weight: 500;
    border-bottom: 3px solid #117865;
}
.shareBtn{
    display: flex;
    align-items: center;
    gap: 12px;
    position: absolute;
    left: 1786px;
    top: 57px;
    width: 124px;
    height: 36px;
    padding-left: 10px;
    border-radius: 4px;
    background: #117865;
    color: #fff;
    font-size: 16.4px;
}
.shareArrow{
    margin-left: -3px;
}

/* ribbon */
.ribbon{
    display: flex;
    position: relative;
    margin: 0 11px 0 12px;
    background: #fff;
    border-radius: 9px;
    box-shadow: 0 1px 4px rgba(0,0,0,0.22);
    z-index: 2;
}
.group{
    display: flex;
    flex-direction: column;
    margin: 6px 0;
    border-right: 1px solid #d6d6d6;
}
.gClip{ width: 240px; }
.gData{ width: 537px; }
.gQueries{ width: 173px; }
.gInsert{ width: 220px; }
.gCalc{ width: 278px; }
.gSens{ width: 110px; }
.gShare{ width: 87px; }
.gCopilot{ width: 88px; }
.groupBody{
    flex: 1;
    display: grid;
}
.groupName{
    height: 20px;
    margin-bottom: 4px;
    line-height: 20px;
    text-align: center;
    font-size: 14.4px;
    color: #444;
}
.dataBtns{
    padding-left: 7px;
    grid-template-columns: 72px 72px 92px 50px 70px 72px 94px;
}
.queryBtns{
    padding-left: 16px;
    grid-template-columns: 75px 75px;
}
.insertBtns{
    padding-left: 12px;
    grid-template-columns: 60px 62px 72px;
}
.calcBtns{
    padding-left: 15px;
    grid-template-columns: 102px 80px 64px;
}
.soloBtn{
    justify-items: center;
}
.rb{
    display: flex;
    flex-direction: column;
    align-items: center;
    padding-top: 7px;
    font-size: 16.4px;
    line-height: 25px;
    text-align: center;
    white-space: nowrap;
}
.rb svg{
    width: 48px;
    height: 48px;
    overflow: visible;
    flex: none;
}
.rb span{
    margin-top: 2px;
}
.rb.off,
.clipRow.off{
    color: #bdbdbd;
}
.chev{
    display: inline-block;
    width: 6px;
    height: 6px;
    margin: 0 1px 3px 5px;
    border-right: 1.5px solid #444;
    border-bottom: 1.5px solid #444;
    transform: rotate(45deg);
}
.off .chev{
    border-color: #bdbdbd;
}
.clipBody{
    grid-template-columns: 78px 1fr;
}
.pasteBtn{
    padding-left: 6px;
}
.clipList{
    display: flex;
    flex-direction: column;
    gap: 11px;
    padding-top: 4px;
}
.clipRow{
    display: flex;
    align-items: center;
    justify-content: flex-start;
    height: 28px;
    font-size: 16.8px;
    white-space: nowrap;
}
.clipRow svg{
    flex: none;
    margin-right: 3px;
}
.clipRow .cutIcon{
    margin-left: 3px;
    margin-right: 6px;
}
.collapse{
    position: absolute;
    right: 13px;
    bottom: 15px;
}
.xl{
    font: bold 17px "Liberation Sans", sans-serif;
    fill: #fff;
    text-anchor: middle;
}
.fx{
    font: italic 24px "Liberation Serif", serif;
    fill: #aaa;
}
.dax{
    font: bold 9px "Liberation Sans", sans-serif;
    fill: #444;
}

/* work area */
.main{
    display: flex;
    position: relative;
}
.rail{
    width: 62px;
    flex: none;
    background: #f3f3f3;
    border-right: 1px solid #ececec;
}
.railBtn{
    display: flex;
    align-items: center;
    justify-content: center;
    height: 60px;
}
.railBtn svg{
    width: 26px;
    height: 26px;
}
.railBtn .line{
    stroke-width: 1.6;
}
.railBtn.current{
    box-shadow: inset 3px 0 0 #117865;
    padding-bottom: 2px;
    margin-bottom: -2px;
}
.center{
    width: 1316px;
    flex: none;
    display: flex;
    flex-direction: column;
    background: #fff;
}
.canvasRow{
    display: flex;
    height: 736px;
}
.canvas{
    width: 1267px;
    padding: 13px 0 0 92px;
}
.page{
    position: relative;
    width: 1082px;
    height: 664px;
    background: #e4e4e4;
    box-shadow: 0 0 8px rgba(0,0,0,0.12);
}
.filters{
    width: 49px;
    padding-top: 22px;
    border-left: 1px solid #b5b5b5;
    background: #fff;
}
.dbl{
    width: 12px;
    height: 12px;
}
.filters .dbl{
    margin-left: 19px;
}
.filterGlyph{
    width: 11px;
    height: 14px;
    margin: 30px 0 0 22px;
}
.filterWord{
    margin: 14px 0 0 9px;
    writing-mode: vertical-rl;
    font-size: 22px;
    font-weight: 600;
    line-height: 28px;
}

/* visuals on the report page */
.visual{
    position: absolute;
    background: #fff;
    box-shadow: 0 2px 1px rgba(0,0,0,0.3);
    overflow: hidden;
}
.vFilter{
    left: 6px;
    top: 81px;
    width: 395px;
    height: 43px;
    border-radius: 5px;
}
.slLabel{
    position: absolute;
    font: italic 8.5px "Open Sans", sans-serif;
    color: #333;
}
.city{
    left: 55px;
    top: 4px;
}
.room{
    left: 225px;
    top: 2px;
    letter-spacing: 0.2px;
}
.slBox{
    position: absolute;
    border: 1px solid #f0f0f0;
    font: 8.5px/17px "Open Sans", sans-serif;
    padding-left: 3px;
}
.cityBox{
    left: 52px;
    top: 18px;
    width: 124px;
    height: 18px;
}
.roomBox{
    left: 223px;
    top: 17px;
    width: 109px;
    height: 18px;
}
.slChev{
    position: absolute;
    width: 10px;
    height: 6px;
}
.c1{
    left: 321px;
    top: 3px;
}
.c2{
    left: 319px;
    top: 23px;
}
.c3{
    left: 163px;
    top: 24px;
}
.hoverTab{
    position: absolute;
    top: 112px;
    width: 36px;
    height: 20px;
    display: flex;
    align-items: center;
    justify-content: center;
    background: #f5f5f5;
    z-index: 1;
}
.hFilter{
    left: 173px;
}
.hMore{
    left: 214px;
}
.dots{
    font-size: 9px;
    letter-spacing: 1px;
    color: #555;
}
.vMonth{
    left: 412px;
    top: 81px;
    width: 663px;
    height: 43px;
    border-radius: 5px;
    display: flex;
    align-items: center;
    padding-left: 14px;
    font: 7.5px "Open Sans", sans-serif;
    color: #444;
}
.mon{
    width: 50px;
    height: 21px;
    line-height: 20px;
    text-align: center;
}
.mon.on{
    margin-right: 1px;
    background: #333;
    border-bottom: 1px solid #999;
    color: #fff;
}
.weeks{
    position: absolute;
    left: 205px;
    top: 0;
    display: grid;
    grid-template-columns: repeat(5, 87px);
    height: 43px;
    line-height: 43px;
    text-align: center;
    font-size: 9px;
    color: #333;
}
.vKpi{
    left: 6px;
    top: 132px;
    width: 399px;
    height: 297px;
    border-radius: 14px;
    padding: 8px 0 0 13px;
}
.kpiRow{
    display: flex;
    text-align: center;
}
.tiles{
    width: 369px;
    height: 58px;
}
.tile{
    border: 1px solid #eaeaea;
    border-left-width: 1px;
}
.tA{
    width: 137px;
    padding-right: 45px;
    padding-top: 0px;
}
.tB{
    width: 95px;
    border-left: none;
}
.tC{
    width: 137px;
    border-left: none;
    padding-left: 24px;
}
.kLabel{
    display: block;
    font: 10.8px/14px "Open Sans", sans-serif;
    color: #605e5c;
}
.kVal{
    display: block;
    margin-top: 8px;
    font: bold 20px/24px "Liberation Sans", sans-serif;
    color: #118dff;
}
.colA{
    width: 92px;
    margin-right: 45px;
}
.colB{
    width: 95px;
}
.deltas{
    height: 13px;
    margin-top: 0px;
}
.delta{
    display: flex;
    align-items: center;
    justify-content: center;
    gap: 3px;
    font: 9px "Open Sans", sans-serif;
    color: #888;
}
.arrow{
    display: block;
    width: 8px;
    height: 10px;
    clip-path: polygon(35% 0, 65% 0, 65% 50%, 100% 50%, 50% 100%, 0 50%, 35% 50%);
    background: #b33a32;
}
.arrow.up{
    background: #4f8a5c;
    transform: rotate(180deg);
}
.second{
    margin-top: 23px;
}
.second .kVal{
    margin-top: 7px;
}
.lower{
    margin-top: 12px;
}
.kNote{
    margin: 10px 0 0 105px;
    font: 7.5px/12px "Open Sans", sans-serif;
    color: #555;
    white-space: nowrap;
}
.kRule{
    width: 224px;
    height: 2px;
    margin: 3px 0 0 4px;
    background: #f6d5c5;
}
.kTable{
    margin: 15px 0 0 66px;
    border-collapse: collapse;
    table-layout: fixed;
    width: 182px;
    font: 8.5px/12.5px "Open Sans", sans-serif;
    color: #252423;
}
.colDay{ width: 47px; }
.colRev{ width: 48px; }
.colOcc{ width: 51px; }
.colAdr{ width: 36px; }
.kTable th{
    font-weight: 500;
    line-height: 12px;
    color: #444;
    text-align: left;
    vertical-align: top;
    padding: 0 3px 6px;
    border-bottom: 1px solid #ddd;
    white-space: nowrap;
}
.kTable td{
    text-align: right;
    padding: 0 3px;
    border-bottom: 1px solid #eee;
}
.kTable .first{
    text-align: left;
}
.total td{
    font-weight: 700;
    border-bottom: none;
}
.dataPoint{
    position: absolute;
    left: 238px;
    top: 165px;
    width: 20px;
    height: 20px;
    background: #444;
    clip-path: polygon(50% 0, 100% 0, 100% 100%, 50% 100%, 0 50%);
}
.vCat{
    left: 412px;
    top: 132px;
    width: 257px;
    height: 40px;
    border-radius: 10px 10px 0 0;
    padding: 0 0 0 15px;
}
.vTrend{
    left: 676px;
    top: 132px;
    width: 399px;
    height: 40px;
    border-radius: 10px 10px 0 0;
    padding: 0 0 0 13px;
}
.vTitle{
    font: bold 10.3px "Open Sans", sans-serif;
    color: #999;
}
.vPlat{
    left: 7px;
    top: 437px;
    width: 420px;
    height: 156px;
    border-radius: 9px;
}
.pTitle{
    font: bold 9px "Open Sans", sans-serif;
    fill: #999;
}
.pLeg{
    font: 7px "Open Sans", sans-serif;
    fill: #888;
}
.pVal{
    font: bold 7.5px "Open Sans", sans-serif;
    fill: #605e5c;
    text-anchor: middle;
}
.pAxis{
    font: 7.5px "Open Sans", sans-serif;
    fill: #888;
}
.pFoot{
    font: bold 6.5px "Open Sans", sans-serif;
    fill: #444;
    text-anchor: middle;
}

/* page tabs */
.tabs{
    display: flex;
    height: 53px;
}
.devices{
    display: flex;
    width: 190px;
    flex: none;
    position: relative;
}
.device{
    position: absolute;
    top: 10px;
}
.device.on{
    left: 20px;
}
.device.on::after{
    content: "";
    display: block;
    width: 36px;
    height: 5px;
    margin: 8px 0 0 -6px;
    border-radius: 3px;
    background: #117865;
}
.phone{
    left: 90px;
    top: 8px;
}
.pager{
    position: absolute;
    left: 139px;
    top: 19px;
    display: flex;
    gap: 24px;
}
.tab{
    display: flex;
    align-items: center;
    justify-content: center;
    width: 82.8px;
    gap: 6px;
    border-left: 1px solid #ccc;
    font-size: 16px;
}
.tab svg{
    width: 17px;
    height: 17px;
    margin-top: 9px;
}
.tab.home{
    width: 111px;
    font-size: 17.2px;
    font-weight: 600;
    border-bottom: 5px solid #117865;
    padding-top: 5px;
}
.addTab{
    display: flex;
    align-items: center;
    justify-content: center;
    width: 58px;
    height: 52px;
    background: #117865;
}

/* visualizations pane */
.vizPane,
.dataPane{
    flex: none;
    border-left: 1px solid #cfcfcf;
    background: #f3f3f3;
}
.vizPane{
    width: 271px;
}
.dataPane{
    width: 270px;
    border-left-color: #cfcfcf;
}
.paneHead{
    display: flex;
    align-items: center;
    justify-content: space-between;
    height: 32px;
    margin-top: 13px;
    padding: 0 15px 0 12px;
    font-size: 22.6px;
    font-weight: 500;
}
.buildLabel{
    margin: 10px 0 0 12px;
    line-height: 28px;
    font-size: 16.6px;
    font-weight: 500;
}
.buildTabs{
    display: flex;
    align-items: center;
    height: 48px;
    margin: 4px 0 0 12px;
}
.buildTab.on{
    background: #fff;
    border-radius: 3px;
    margin-right: 57px;
}
.notchLine{
    margin-top: 7px;
}
.vizIcons{
    display: flex;
    flex-direction: column;
    align-items: flex-end;
    gap: 10px;
    margin-top: 14px;
    padding-right: 16px;
}
.vizIcons svg{
    width: 28px;
    height: 32px;
}
.num123{
    font: 13px "Noto Sans", sans-serif;
    fill: #2b88c9;
    text-anchor: middle;
}
.rGlyph{
    font: bold 23px "Noto Sans", sans-serif;
    fill: #2b88c9;
    text-anchor: middle;
}
.vizRule{
    height: 1px;
    margin-top: 52px;
    background: #e2e2e2;
}
.dropBox{
    width: 255px;
    height: 38px;
    margin: 0 0 0 6px;
    padding-left: 12px;
    border: 1px dashed #d0d0d0;
    border-radius: 2px;
    background: #fff;
    line-height: 36px;
    font-size: 17px;
}
.dropBox.upper{
    height: 41px;
    margin-top: 46px;
}
.keepRow{
    display: flex;
    align-items: center;
    justify-content: space-between;
    height: 24px;
    margin: 53px 33px 16px 18px;
    font-size: 17.2px;
}
.toggle{
    display: flex;
    align-items: center;
    justify-content: space-between;
    width: 48px;
    height: 24px;
    padding: 0 5px 0 7px;
    border-radius: 12px;
    background: #117865;
    color: #fff;
    font-size: 13px;
}
.toggle i{
    display: block;
    width: 12px;
    height: 12px;
    border-radius: 50%;
    background: #fff;
}

/* data pane */
.dataPane .paneHead{
    padding-right: 14px;
    padding-left: 12px;
}
.dataSearch{
    display: flex;
    align-items: center;
    gap: 9px;
    width: 257px;
    height: 35px;
    margin: 24px 0 0 7px;
    padding-left: 18px;
    background: #fff;
    border: 1px solid #d8d8d8;
    border-bottom-color: #777;
    border-radius: 5px;
    font-size: 19.5px;
    color: #666;
}
.tree{
    margin-top: 14px;
}
.tree li{
    display: flex;
    align-items: center;
    height: 36px;
    padding-left: 26px;
    font-size: 16.6px;
    color: #333;
    white-space: nowrap;
}
.tw{
    width: 8px;
    height: 14px;
    margin-right: 11px;
}
.tIcon{
    width: 19px;
    height: 19px;
    margin-right: 7px;
}

/* focus chart */
.focusChart{
    position: absolute;
    left: 400px;
    top: 168px;
    width: 1201px;
    height: 481px;
    border: 1px solid #333;
    background: #fff;
    z-index: 3;
}
.cTitle{
    height: 36px;
    line-height: 35px;
    text-align: center;
    font: bold 25.8px/35px "Open Sans", sans-serif;
    color: #e66c37;
}
.cLegTitle{
    font: bold 19px "Open Sans", sans-serif;
    fill: #605e5c;
}
.cLabel{
    font: 19px "Open Sans", sans-serif;
    fill: #605e5c;
}
.mid{
    font-size: 18px;
    text-anchor: middle;
}
.series{
    fill: none;
    stroke-width: 3;
    stroke-dasharray: 8 7.5;
}
.sWeekend{
    stroke: #12239e;
}
.sWeekday{
    stroke: #118dff;
}

/* status bar */
.status{
    display: flex;
    align-items: center;
    justify-content: space-between;
    padding: 0 27px 0 6px;
    border-top: 1px solid #d0d0d0;
    background: #f3f3f3;
    z-index: 1;
}
.pageNo{
    font-size: 17px;
    color: #444;
}
.zoomBox{
    display: flex;
    align-items: center;
}
.zoomSign{
    font-size: 20px;
    font-weight: 600;
    color: #444;
}
.slider{
    position: relative;
    width: 150px;
    height: 1px;
    margin: 0 8px;
    background: #444;
}
.thumb{
    position: absolute;
    left: 22px;
    top: -9px;
    width: 6px;
    height: 18px;
    background: #444;
}
.tick{
    position: absolute;
    left: 74px;
    top: -3px;
    width: 2px;
    height: 7px;
    background: #444;
}
.zoomPct{
    margin: 0 31px 0 18px;
    font-size: 17px;
    color: #444;
}
```
